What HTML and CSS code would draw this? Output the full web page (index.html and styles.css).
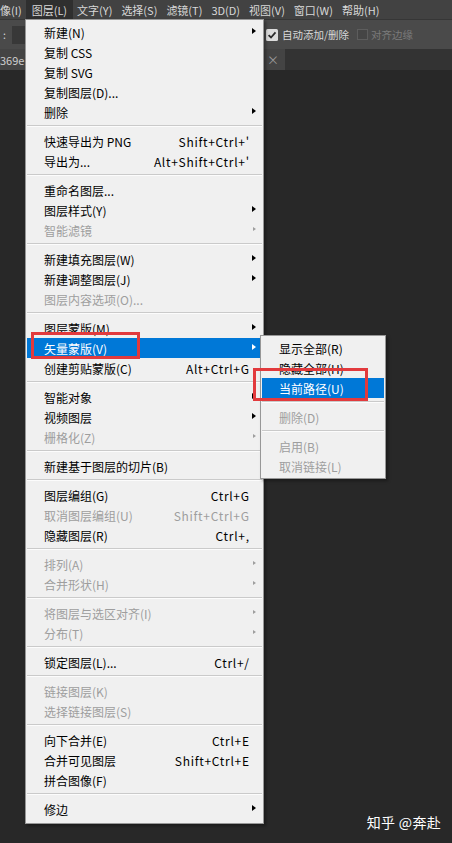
FILE: index.html
```html
<!DOCTYPE html>
<html lang="zh-CN">
<head>
  <meta charset="UTF-8">
  <meta name="viewport" content="width=device-width, initial-scale=1.0">
  <title>图层菜单</title>
  <link rel="stylesheet" href="styles.css">
</head>
<body>
  <div class="menubar">
    <span class="top-item">像(I)</span>
    <span class="top-item active">图层(L)</span>
    <span class="top-item">文字(Y)</span>
    <span class="top-item">选择(S)</span>
    <span class="top-item">滤镜(T)</span>
    <span class="top-item">3D(D)</span>
    <span class="top-item">视图(V)</span>
    <span class="top-item">窗口(W)</span>
    <span class="top-item">帮助(H)</span>
  </div>

  <div class="optionsbar">
    <span class="colon">:</span>
    <span class="field"></span>
    <div class="tool-opts">
      <svg class="check" width="12" height="12" viewBox="0 0 12 12">
        <rect width="12" height="12" rx="1.5" fill="#dcdcdc"/>
        <path d="M2.6 6.1 L5 8.5 L9.5 3.4" stroke="#2a2a2a" stroke-width="1.8" fill="none"/>
      </svg>
      <span class="opt">自动添加/删除</span>
      <span class="check off"></span>
      <span class="opt dim">对齐边缘</span>
    </div>
  </div>

  <div class="tabbar">
    <div class="tab">
      <span class="tab-name">369e</span>
      <span class="tab-close">×</span>
    </div>
  </div>

  <!-- 图层 下拉菜单 -->
  <div class="menu">
    <div class="item"><span class="label">新建(N)</span><i class="sub more"></i></div>
    <div class="item"><span class="label">复制 CSS</span><i class="sub"></i></div>
    <div class="item"><span class="label">复制 SVG</span><i class="sub"></i></div>
    <div class="item"><span class="label">复制图层(D)...</span><i class="sub"></i></div>
    <div class="item"><span class="label">删除</span><i class="sub more"></i></div>
    <div class="sep"></div>
    <div class="item"><span class="label">快速导出为 PNG</span><span class="key">Shift+Ctrl+'</span><i class="sub"></i></div>
    <div class="item"><span class="label">导出为...</span><span class="key">Alt+Shift+Ctrl+'</span><i class="sub"></i></div>
    <div class="sep"></div>
    <div class="item"><span class="label">重命名图层...</span><i class="sub"></i></div>
    <div class="item"><span class="label">图层样式(Y)</span><i class="sub more"></i></div>
    <div class="item off"><span class="label">智能滤镜</span><i class="sub more"></i></div>
    <div class="sep"></div>
    <div class="item"><span class="label">新建填充图层(W)</span><i class="sub more"></i></div>
    <div class="item"><span class="label">新建调整图层(J)</span><i class="sub more"></i></div>
    <div class="item off"><span class="label">图层内容选项(O)...</span><i class="sub"></i></div>
    <div class="sep"></div>
    <div class="item"><span class="label">图层蒙版(M)</span><i class="sub more"></i></div>
    <div class="item hot">
      <span class="label">矢量蒙版(V)</span><i class="sub more"></i>
      <div class="submenu">
        <div class="item"><span class="label">显示全部(R)</span><i class="sub"></i></div>
        <div class="item"><span class="label">隐藏全部(H)</span><i class="sub"></i></div>
        <div class="item hot"><span class="label">当前路径(U)</span><i class="sub"></i></div>
        <div class="sep"></div>
        <div class="item off"><span class="label">删除(D)</span><i class="sub"></i></div>
        <div class="sep"></div>
        <div class="item off"><span class="label">启用(B)</span><i class="sub"></i></div>
        <div class="item off"><span class="label">取消链接(L)</span><i class="sub"></i></div>
      </div>
    </div>
    <div class="item"><span class="label">创建剪贴蒙版(C)</span><span class="key">Alt+Ctrl+G</span><i class="sub"></i></div>
    <div class="sep"></div>
    <div class="item"><span class="label">智能对象</span><i class="sub more"></i></div>
    <div class="item"><span class="label">视频图层</span><i class="sub more"></i></div>
    <div class="item off"><span class="label">栅格化(Z)</span><i class="sub more"></i></div>
    <div class="sep"></div>
    <div class="item"><span class="label">新建基于图层的切片(B)</span><i class="sub"></i></div>
    <div class="sep"></div>
    <div class="item"><span class="label">图层编组(G)</span><span class="key">Ctrl+G</span><i class="sub"></i></div>
    <div class="item off"><span class="label">取消图层编组(U)</span><span class="key">Shift+Ctrl+G</span><i class="sub"></i></div>
    <div class="item"><span class="label">隐藏图层(R)</span><span class="key">Ctrl+,</span><i class="sub"></i></div>
    <div class="sep"></div>
    <div class="item off"><span class="label">排列(A)</span><i class="sub more"></i></div>
    <div class="item off"><span class="label">合并形状(H)</span><i class="sub more"></i></div>
    <div class="sep"></div>
    <div class="item off"><span class="label">将图层与选区对齐(I)</span><i class="sub more"></i></div>
    <div class="item off"><span class="label">分布(T)</span><i class="sub more"></i></div>
    <div class="sep"></div>
    <div class="item"><span class="label">锁定图层(L)...</span><span class="key">Ctrl+/</span><i class="sub"></i></div>
    <div class="sep"></div>
    <div class="item off"><span class="label">链接图层(K)</span><i class="sub"></i></div>
    <div class="item off"><span class="label">选择链接图层(S)</span><i class="sub"></i></div>
    <div class="sep"></div>
    <div class="item"><span class="label">向下合并(E)</span><span class="key">Ctrl+E</span><i class="sub"></i></div>
    <div class="item"><span class="label">合并可见图层</span><span class="key">Shift+Ctrl+E</span><i class="sub"></i></div>
    <div class="item"><span class="label">拼合图像(F)</span><i class="sub"></i></div>
    <div class="sep"></div>
    <div class="item"><span class="label">修边</span><i class="sub more"></i></div>
  </div>

  <!-- 标注框 -->
  <div class="mark mark-vector"></div>
  <div class="mark mark-path"></div>

  <div class="watermark">知乎 @奔赴</div>
</body>
</html>
```

FILE: styles.css
```css
body {
  margin: 0;
  width: 452px;
  height: 843px;
  overflow: hidden;
  position: relative;
  background-color: #282828;
  font-family: "Noto Sans CJK SC", "Noto Sans", sans-serif;
}

.menubar {
  display: flex;
  height: 19px;
  background-color: #424242;
  border-bottom: 1px solid #363636;
  color: #d8d8d8;
  font-size: 11px;
}

.top-item {
  display: flex;
  align-items: center;
  padding: 0 4.5px;
  white-space: nowrap;
}

.top-item:first-child {
  padding-left: 0;
}

.top-item.active {
  padding: 0 5.5px;
  background-color: #2f2f2f;
}

.optionsbar {
  display: flex;
  align-items: center;
  height: 29px;
  background-color: #4a4a4a;
  color: #d8d8d8;
  font-size: 10.5px;
}

.colon {
  margin-left: 3px;
}

.field {
  width: 14px;
  height: 18px;
  margin-left: 6px;
  background-color: #383838;
}

.tool-opts {
  display: flex;
  align-items: center;
  margin-left: 240px;
}

.check {
  width: 12px;
  height: 12px;
  flex: none;
}

.check.off {
  box-sizing: border-box;
  width: 11px;
  height: 11px;
  margin-left: 8px;
  border: 1px solid #5d5d5d;
  background-color: #454545;
}

.opt {
  margin-left: 4px;
}

.opt.dim {
  margin-left: 3px;
  color: #7a7a7a;
}

.tabbar {
  display: flex;
  height: 21px;
  background-color: #333333;
}

.tab {
  display: flex;
  align-items: center;
  width: 285px;
  overflow: hidden;
  background-color: #444444;
  color: #cccccc;
  font-size: 11px;
}

.tab-name {
  flex: 1;
  white-space: nowrap;
}

.tab-close {
  margin-right: 6px;
  color: #9a9a9a;
  font-size: 12px;
}

/* 下拉菜单 */
.menu,
.submenu {
  position: absolute;
  box-sizing: border-box;
  padding: 2px 1px;
  background-color: #f0f0f0;
  border: 1px solid #979797;
  color: #000;
  font-size: 12px;
  box-shadow: 2px 2px 3px rgba(0, 0, 0, 0.35);
}

.menu {
  left: 25px;
  top: 19px;
  width: 239px;
  padding-bottom: 4px;
}

.submenu {
  left: 233px;
  top: -3px;
  width: 126px;
}

.item {
  display: flex;
  align-items: center;
  position: relative;
  height: 20px;
  padding-left: 17px;
  white-space: nowrap;
}

.label {
  flex: 1;
}

.key {
  letter-spacing: 0.7px;
  margin-right: -0.7px;
}

.sub {
  position: relative;
  align-self: stretch;
  width: 13px;
  flex: none;
}

.sub.more::before {
  content: "";
  position: absolute;
  left: 3px;
  top: 6px;
  border-left: 4px solid #000;
  border-top: 3.5px solid transparent;
  border-bottom: 3.5px solid transparent;
}

.item.off {
  color: #9e9e9e;
}

.item.off > .sub.more::before {
  left: 4px;
  top: 7px;
  border-left: 3px solid #9e9e9e;
  border-top-width: 2.5px;
  border-bottom-width: 2.5px;
}

.item.hot {
  background-color: #0078d7;
  color: #fff;
}

.item.hot > .sub.more::before {
  border-left-color: #fff;
}

.sep {
  height: 0;
  margin: 3px 0 4px;
  border-top: 1px solid #cacaca;
  border-bottom: 1px solid #fcfcfc;
}

/* 红色标注 */
.mark {
  position: absolute;
  box-sizing: border-box;
  border: 3px solid #e23a3d;
}

.mark-vector {
  left: 31px;
  top: 332px;
  width: 109px;
  height: 27px;
}

.mark-path {
  left: 253px;
  top: 368px;
  width: 115px;
  height: 33px;
}

.watermark {
  position: absolute;
  right: 11px;
  bottom: 11px;
  color: #fff;
  font-size: 14px;
  letter-spacing: 0.3px;
}
```
